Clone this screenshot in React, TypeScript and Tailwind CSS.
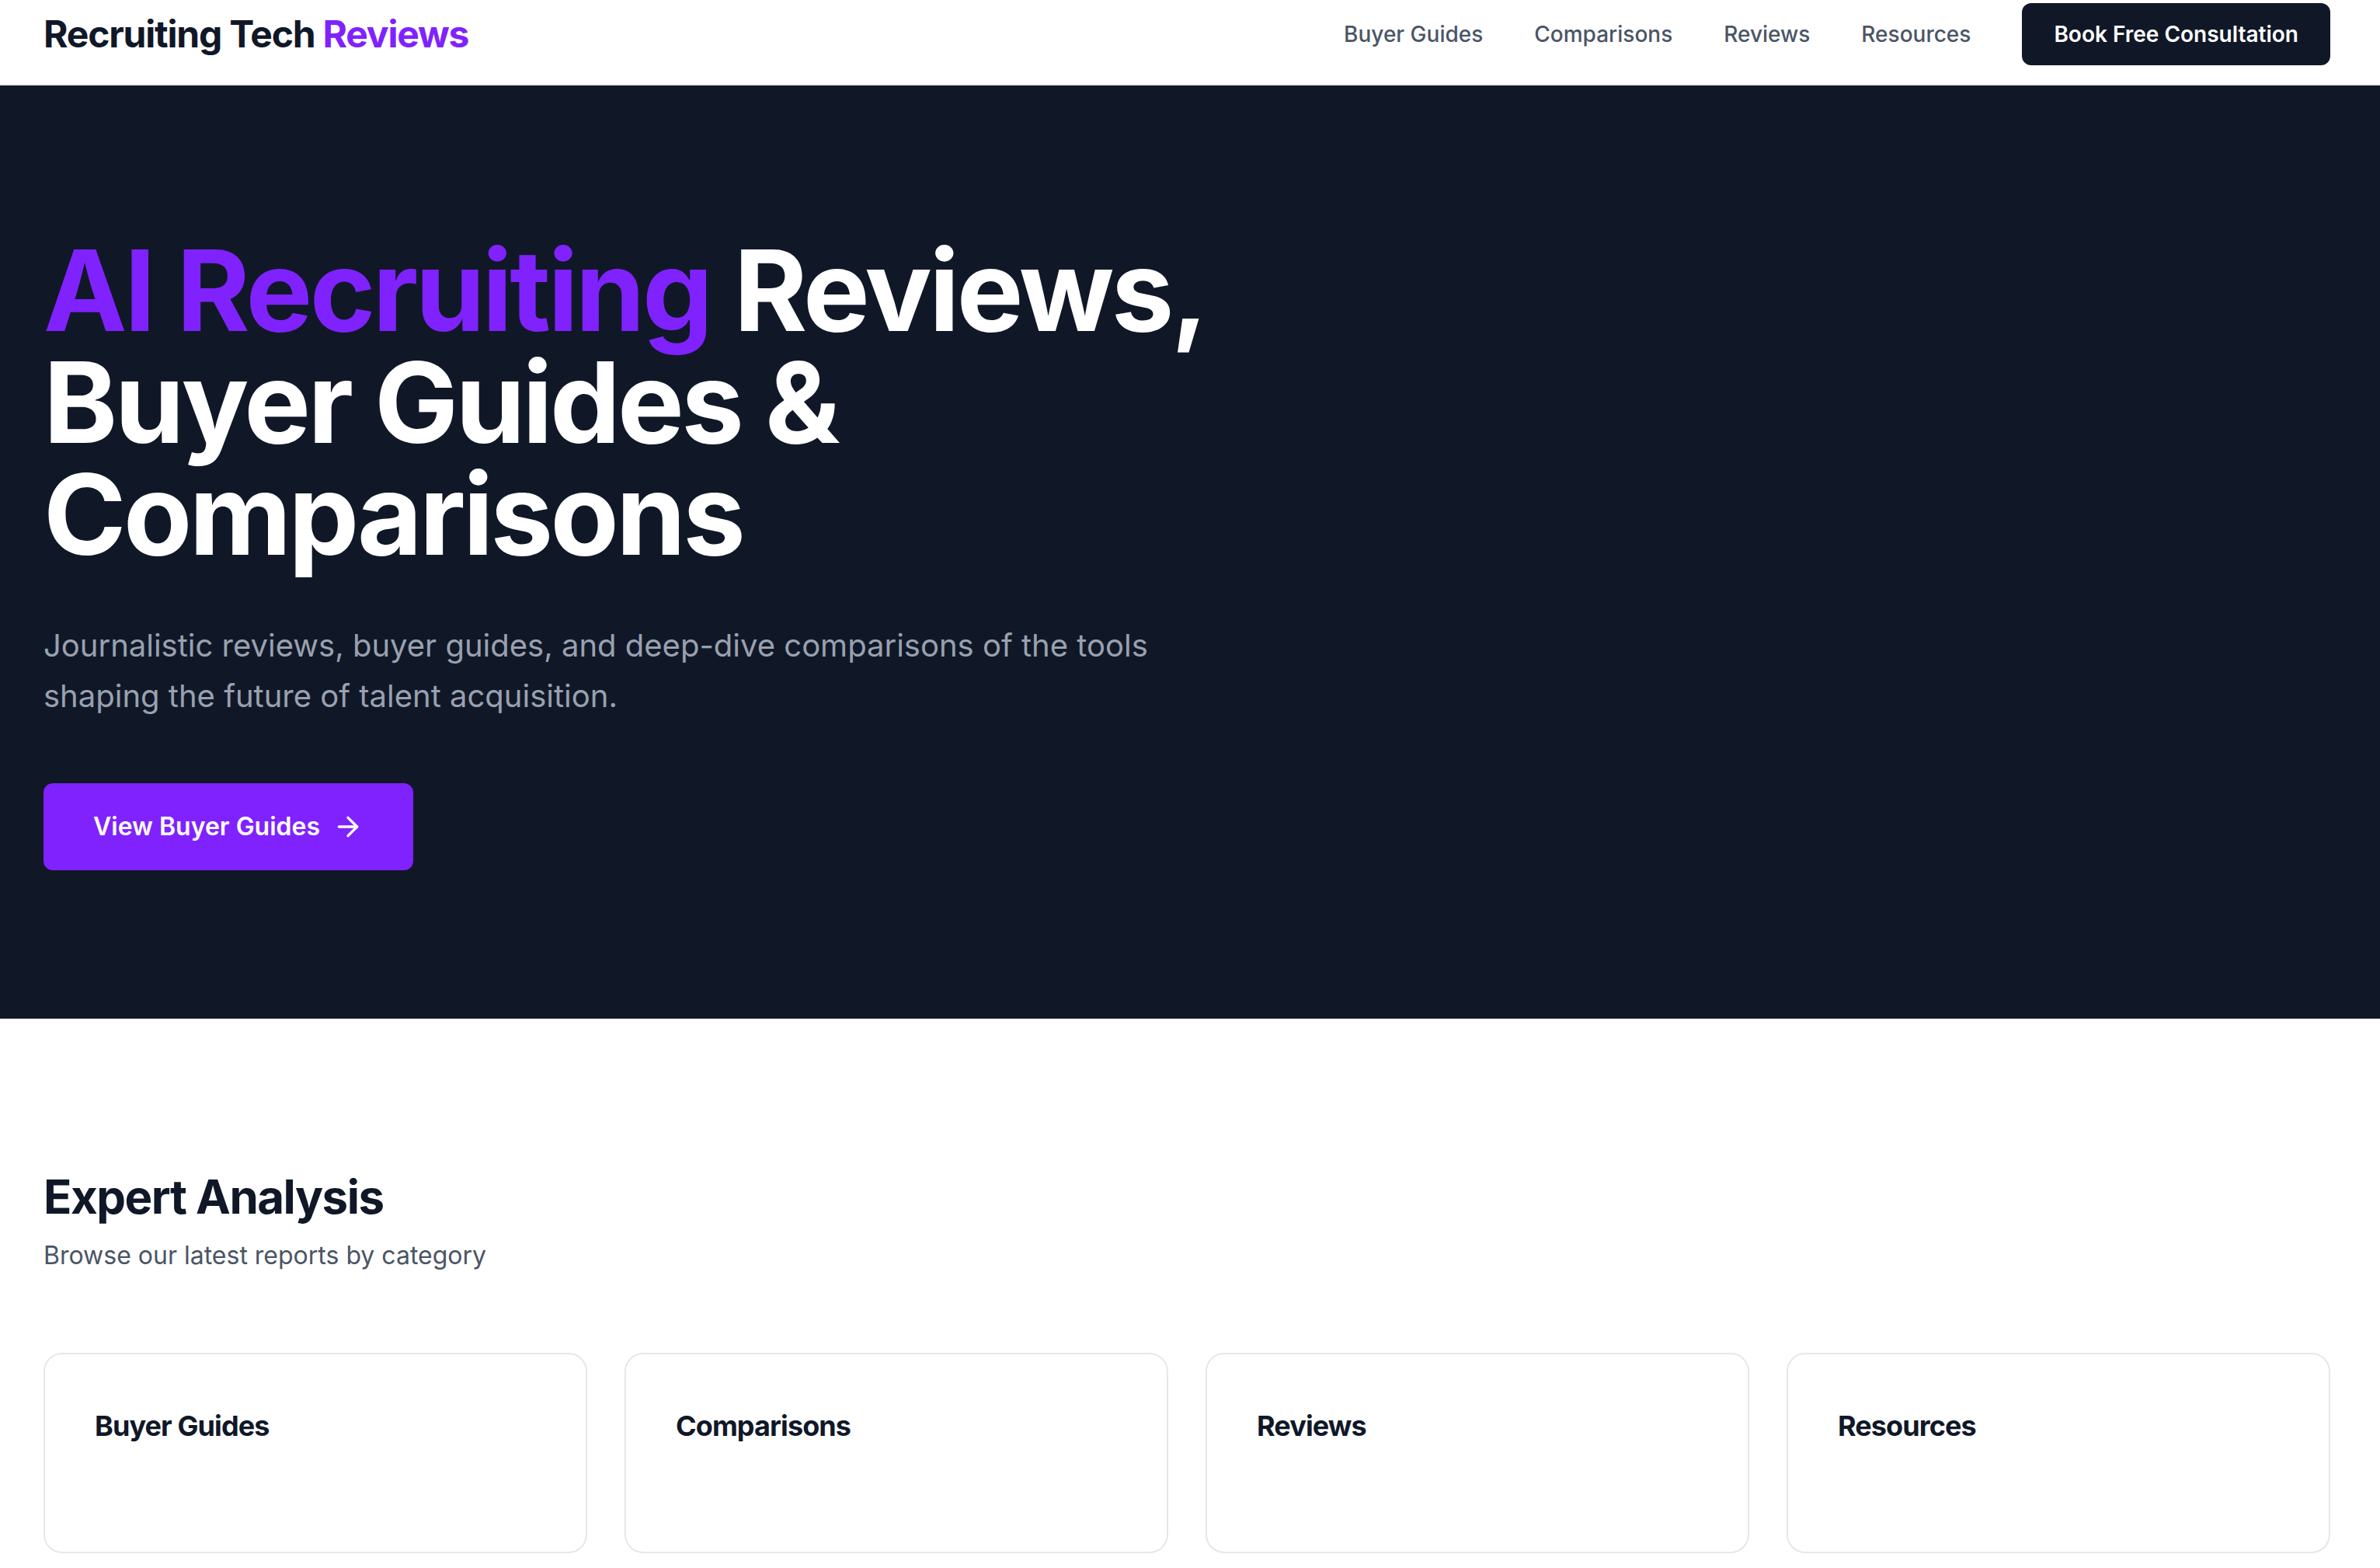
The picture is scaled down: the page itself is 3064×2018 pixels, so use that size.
import { ArrowRight } from "lucide-react";

const navLinks = ["Buyer Guides", "Comparisons", "Reviews", "Resources"];
const categories = ["Buyer Guides", "Comparisons", "Reviews", "Resources"];

function Header() {
  return (
    <header className="h-[110px] border-b-2 border-gray-200 bg-white pb-[20px]">
      <div className="flex h-full items-center justify-between pl-[56px] pr-[64px]">
        <a href="#" className="text-[48px] font-bold leading-none tracking-tight text-gray-900">
          Recruiting Tech <span className="text-violet-600">Reviews</span>
        </a>
        <nav className="flex items-center gap-[66px]">
          {navLinks.map((link) => (
            <a key={link} href="#" className="text-[28px] font-medium leading-[40px] text-gray-600">
              {link}
            </a>
          ))}
          <a
            href="#"
            className="flex h-[80px] items-center rounded-[12px] bg-gray-900 px-[41px] text-[28px] font-semibold text-white"
          >
            Book Free Consultation
          </a>
        </nav>
      </div>
    </header>
  );
}

function Hero() {
  return (
    <section className="bg-gray-900 pb-[191px] pt-[192px]">
      <div className="pl-[56px] pr-[64px]">
        <h1 className="max-w-[1792px] text-[144px] font-bold leading-none tracking-tight text-white">
          <span className="text-violet-600">AI Recruiting</span> Reviews, Buyer Guides &amp; Comparisons
        </h1>
        <p className="mt-[64px] max-w-[1536px] text-[40px] leading-[65px] text-gray-400">
          Journalistic reviews, buyer guides, and deep-dive comparisons of the tools shaping the future of
          talent acquisition.
        </p>
        <a
          href="#"
          className="mt-[80px] inline-flex h-[112px] items-center gap-[16px] rounded-[12px] bg-violet-600 px-[64px] text-[32px] font-semibold text-white"
        >
          View Buyer Guides
          <ArrowRight size={40} strokeWidth={2} />
        </a>
      </div>
    </section>
  );
}

function ExpertAnalysis() {
  return (
    <section className="bg-white pt-[193px]">
      <div className="pl-[56px] pr-[64px]">
        <h2 className="text-[60px] font-bold leading-[72px] tracking-tight text-gray-900">Expert Analysis</h2>
        <p className="mt-[16px] text-[32px] leading-[48px] text-gray-600">Browse our latest reports by category</p>
        <div className="mt-[101px] grid grid-cols-4 gap-[48px]">
          {categories.map((c) => (
            <div key={c} className="h-[258px] rounded-[24px] border-2 border-gray-200 bg-white p-[64px]">
              <h3 className="text-[36px] font-bold leading-[56px] tracking-tight text-gray-900">{c}</h3>
            </div>
          ))}
        </div>
      </div>
    </section>
  );
}

export default function App() {
  return (
    <div className="min-h-screen bg-white font-['Inter',sans-serif] antialiased">
      <Header />
      <Hero />
      <ExpertAnalysis />
    </div>
  );
}
